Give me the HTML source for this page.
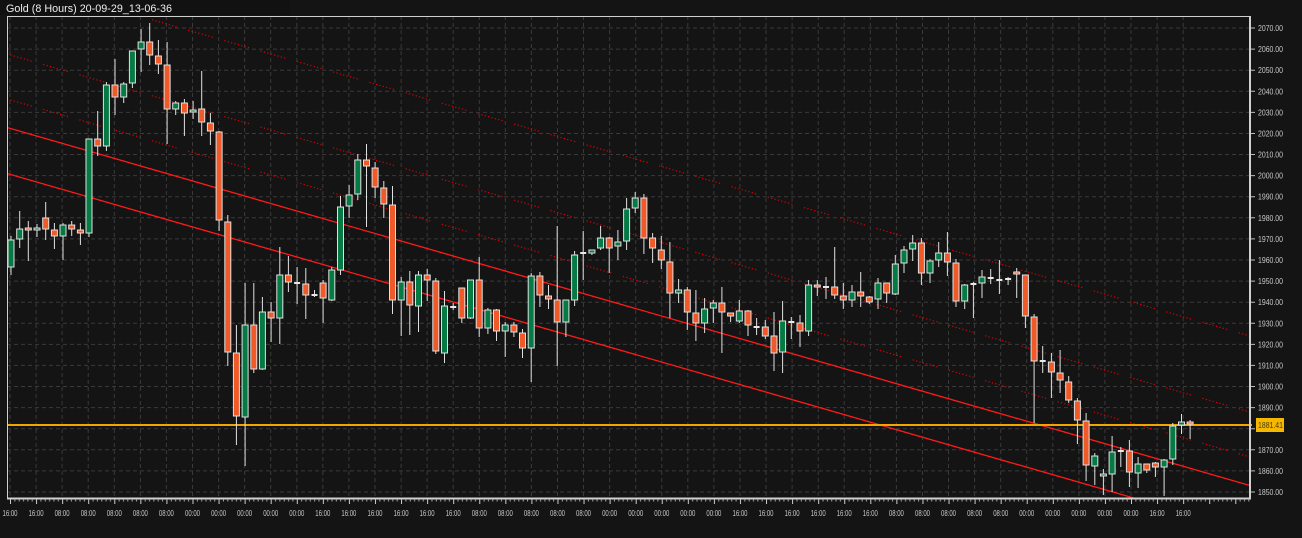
<!DOCTYPE html>
<html><head><meta charset="utf-8"><style>
html,body{margin:0;padding:0;background:#141414;}
svg{display:block;font-family:"Liberation Sans",sans-serif;}
</style></head><body>
<svg width="1302" height="538" viewBox="0 0 1302 538" xmlns="http://www.w3.org/2000/svg">
<rect width="1302" height="538" fill="#141414"/>
<rect x="0" y="0" width="290" height="15" fill="#111"/>
<text x="6" y="12" font-size="11" fill="#eeeeee" textLength="166" lengthAdjust="spacingAndGlyphs">Gold (8 Hours) 20-09-29_13-06-36</text>
<path stroke="#3a3a3a" stroke-width="1" stroke-dasharray="4 3" fill="none" d="M7 28H1250M7 49.1H1250M7 70.2H1250M7 91.3H1250M7 112.4H1250M7 133.5H1250M7 154.5H1250M7 175.6H1250M7 196.7H1250M7 217.8H1250M7 238.9H1250M7 260H1250M7 281.1H1250M7 302.2H1250M7 323.3H1250M7 344.4H1250M7 365.4H1250M7 386.5H1250M7 407.6H1250M7 428.7H1250M7 449.8H1250M7 470.9H1250M7 492H1250"/>
<path stroke="#3a3a3a" stroke-width="1" stroke-dasharray="4 3" fill="none" d="M10 16V498M36.1 16V498M62.1 16V498M88.2 16V498M114.3 16V498M140.4 16V498M166.4 16V498M192.5 16V498M218.6 16V498M244.6 16V498M270.7 16V498M296.8 16V498M322.8 16V498M348.9 16V498M375 16V498M401.1 16V498M427.1 16V498M453.2 16V498M479.3 16V498M505.3 16V498M531.4 16V498M557.5 16V498M583.5 16V498M609.6 16V498M635.7 16V498M661.8 16V498M687.8 16V498M713.9 16V498M740 16V498M766 16V498M792.1 16V498M818.2 16V498M844.2 16V498M870.3 16V498M896.4 16V498M922.5 16V498M948.5 16V498M974.6 16V498M1000.7 16V498M1026.7 16V498M1052.8 16V498M1078.9 16V498M1104.9 16V498M1131 16V498M1157.1 16V498M1183.2 16V498"/>
<defs>
<clipPath id="c"><rect x="7" y="16" width="1243" height="482"/></clipPath>
<pattern id="tk" x="10" y="0" width="26.07" height="538" patternUnits="userSpaceOnUse">
<rect x="0" y="499" width="1" height="5" fill="#ccc"/>
<rect x="4.35" y="499" width="1" height="2.5" fill="#aaa"/>
<rect x="8.7" y="499" width="1" height="2.5" fill="#aaa"/>
<rect x="13.03" y="499" width="1" height="2.5" fill="#aaa"/>
<rect x="17.38" y="499" width="1" height="2.5" fill="#aaa"/>
<rect x="21.72" y="499" width="1" height="2.5" fill="#aaa"/>
</pattern>
</defs>
<g clip-path="url(#c)" fill="none">
<path stroke="#e00000" stroke-width="1.2" stroke-dasharray="1.2 2.3 1.2 2.3 1.2 2.3 1.2 2.3 1.2 2.3 1.2 2.3 1.2 2.3 1.2 12" d="M7 -22L1250 336M7 54L1250 412M7 99L1250 457"/>
<path stroke="#ff1a1a" stroke-width="1.3" d="M7 127.5L1250 485.5M7 173.5L1250 531.5"/>
</g>
<rect x="7" y="424" width="1245" height="2" fill="#f0a500"/>
<path stroke="#e0e0e0" stroke-width="1" fill="none" d="M11 236V275M19.7 211V248M28.3 221V261M37 224V237M45.7 202V240M54.4 223V249M63 223V260M71.7 221V236M80.4 223V245M89 139V237M97.7 111V156M106.4 82V151M115 59V115M123.7 82V103M132.4 51V88M141.1 29V72M149.7 23V65M158.4 40V74M167.1 42V144M175.7 101V115M184.4 99V136M193.1 101V119M201.7 71V136M210.4 113V145M219.1 131V231M227.8 215V366M236.4 325V445M245.1 283V466M253.8 283V373M262.4 297V370M271.1 302V342M279.8 247V344M288.4 256V292M297.1 267V304M305.8 268V319M314.5 290V297M323.1 280V323M331.8 267V301M340.5 196V275M349.1 185V218M357.8 154V200M366.5 144V227M375.1 162V198M383.8 181V218M392.5 186V314M401.2 277V336M409.8 271V335M418.5 271V332M427.2 269V301M435.8 278V354M444.5 291V363M453.2 303V310M461.8 288V323M470.5 280V319M479.2 257V337M487.9 308V334M496.5 309V341M505.2 322V357M513.9 322V337M522.5 329V358M531.2 273V382M539.9 272V307M548.5 285V309M557.2 226V366M565.9 300V337M574.6 251V306M583.2 231V280M591.9 250V255M600.6 226V250M609.2 237V273M617.9 230V260M626.6 198V250M635.2 192V213M643.9 194V254M652.6 233V263M661.3 236V269M669.9 242V318M678.6 279V303M687.3 287V330M695.9 290V341M704.6 298V333M713.3 300V323M721.9 287V353M730.6 313V322M739.3 300V323M748 310V336M756.6 318V335M765.3 320V339M774 312V371M782.6 301V373M791.3 317V339M800 315V347M808.6 280V336M817.3 280V296M826 277V299M834.7 247V299M843.3 283V309M852 285V307M860.7 272V307M869.3 296V304M878 278V309M886.7 283V303M895.3 255V295M904 246V273M912.7 235V261M921.4 238V285M930 259V283M938.7 242V267M947.4 232V276M956 259V307M964.7 284V309M973.4 282V318M982 270V298M990.7 269V284M999.4 260V294M1008.1 277V285M1016.7 268V298M1025.4 275V328M1034.1 314V423M1042.7 346V373M1051.4 353V398M1060.1 350V393M1068.7 376V403M1077.4 398V444M1086.1 413V481M1094.8 453V485M1103.4 469V495M1112.1 436V492M1120.8 447V467M1129.4 440V487M1138.1 457V488M1146.8 464V473M1155.4 462V477M1164.1 459V496M1172.8 423V465M1181.5 414V434M1190.1 420V439"/>
<g fill="#057a45" stroke="#e0e0e0" stroke-width="1">
<rect x="8" y="240" width="6" height="27"/>
<rect x="16.7" y="229" width="6" height="10"/>
<rect x="34" y="228" width="6" height="2"/>
<rect x="60" y="225" width="6" height="11"/>
<rect x="86" y="139" width="6" height="94"/>
<rect x="103.4" y="85" width="6" height="61"/>
<rect x="120.7" y="84" width="6" height="13"/>
<rect x="129.4" y="51" width="6" height="32"/>
<rect x="138.1" y="42" width="6" height="7"/>
<rect x="172.7" y="103" width="6" height="6"/>
<rect x="190.1" y="110" width="6" height="2"/>
<rect x="242.1" y="325" width="6" height="92"/>
<rect x="259.4" y="312" width="6" height="57"/>
<rect x="276.8" y="275" width="6" height="43"/>
<rect x="328.8" y="270" width="6" height="30"/>
<rect x="337.5" y="207" width="6" height="63"/>
<rect x="346.1" y="195" width="6" height="11"/>
<rect x="354.8" y="160" width="6" height="34"/>
<rect x="398.2" y="282" width="6" height="18"/>
<rect x="415.5" y="275" width="6" height="31"/>
<rect x="441.5" y="306" width="6" height="47"/>
<rect x="467.5" y="280" width="6" height="38"/>
<rect x="484.9" y="310" width="6" height="18"/>
<rect x="502.2" y="325" width="6" height="6"/>
<rect x="528.2" y="276" width="6" height="72"/>
<rect x="562.9" y="300" width="6" height="22"/>
<rect x="571.6" y="255" width="6" height="45"/>
<rect x="588.9" y="250" width="6" height="3"/>
<rect x="597.6" y="238" width="6" height="10"/>
<rect x="614.9" y="242" width="6" height="4"/>
<rect x="623.6" y="209" width="6" height="32"/>
<rect x="632.2" y="198" width="6" height="10"/>
<rect x="675.6" y="290" width="6" height="3"/>
<rect x="701.6" y="309" width="6" height="14"/>
<rect x="710.3" y="303" width="6" height="5"/>
<rect x="736.3" y="311" width="6" height="10"/>
<rect x="779.6" y="321" width="6" height="31"/>
<rect x="805.6" y="285" width="6" height="46"/>
<rect x="849" y="292" width="6" height="8"/>
<rect x="875" y="283" width="6" height="16"/>
<rect x="892.3" y="264" width="6" height="30"/>
<rect x="901" y="250" width="6" height="13"/>
<rect x="909.7" y="243" width="6" height="6"/>
<rect x="927" y="261" width="6" height="12"/>
<rect x="935.7" y="253" width="6" height="7"/>
<rect x="961.7" y="285" width="6" height="16"/>
<rect x="979" y="277" width="6" height="6"/>
<rect x="1091.8" y="456" width="6" height="10"/>
<rect x="1100.4" y="474" width="6" height="2"/>
<rect x="1109.1" y="452" width="6" height="22"/>
<rect x="1135.1" y="464" width="6" height="9"/>
<rect x="1161.1" y="460" width="6" height="7"/>
<rect x="1169.8" y="426" width="6" height="33"/>
<rect x="1178.5" y="422" width="6" height="3"/>
</g>
<g fill="#f05a28" stroke="#e0e0e0" stroke-width="1">
<rect x="25.3" y="228" width="6" height="2"/>
<rect x="42.7" y="218" width="6" height="11"/>
<rect x="51.4" y="230" width="6" height="6"/>
<rect x="68.7" y="225" width="6" height="4"/>
<rect x="77.4" y="230" width="6" height="3"/>
<rect x="94.7" y="139" width="6" height="7"/>
<rect x="112" y="85" width="6" height="12"/>
<rect x="146.7" y="42" width="6" height="13"/>
<rect x="155.4" y="56" width="6" height="8"/>
<rect x="164.1" y="65" width="6" height="44"/>
<rect x="181.4" y="103" width="6" height="10"/>
<rect x="198.7" y="109" width="6" height="13"/>
<rect x="207.4" y="123" width="6" height="8"/>
<rect x="216.1" y="132" width="6" height="88"/>
<rect x="224.8" y="222" width="6" height="130"/>
<rect x="233.4" y="353" width="6" height="63"/>
<rect x="250.8" y="325" width="6" height="44"/>
<rect x="268.1" y="312" width="6" height="6"/>
<rect x="285.4" y="275" width="6" height="7"/>
<rect x="302.8" y="284" width="6" height="11"/>
<rect x="320.1" y="283" width="6" height="15"/>
<rect x="363.5" y="160" width="6" height="6"/>
<rect x="372.1" y="168" width="6" height="19"/>
<rect x="380.8" y="188" width="6" height="16"/>
<rect x="389.5" y="205" width="6" height="95"/>
<rect x="406.8" y="282" width="6" height="23"/>
<rect x="424.2" y="275" width="6" height="5"/>
<rect x="432.8" y="281" width="6" height="70"/>
<rect x="458.8" y="288" width="6" height="30"/>
<rect x="476.2" y="280" width="6" height="48"/>
<rect x="493.5" y="310" width="6" height="21"/>
<rect x="510.9" y="325" width="6" height="7"/>
<rect x="519.5" y="333" width="6" height="15"/>
<rect x="536.9" y="276" width="6" height="19"/>
<rect x="545.5" y="296" width="6" height="3"/>
<rect x="554.2" y="300" width="6" height="22"/>
<rect x="606.2" y="238" width="6" height="10"/>
<rect x="640.9" y="198" width="6" height="40"/>
<rect x="649.6" y="238" width="6" height="10"/>
<rect x="658.3" y="250" width="6" height="10"/>
<rect x="666.9" y="262" width="6" height="31"/>
<rect x="684.3" y="290" width="6" height="22"/>
<rect x="692.9" y="313" width="6" height="10"/>
<rect x="718.9" y="303" width="6" height="9"/>
<rect x="727.6" y="313" width="6" height="3"/>
<rect x="745" y="311" width="6" height="14"/>
<rect x="762.3" y="327" width="6" height="9"/>
<rect x="771" y="336" width="6" height="17"/>
<rect x="797" y="323" width="6" height="8"/>
<rect x="814.3" y="285" width="6" height="2"/>
<rect x="831.7" y="287" width="6" height="8"/>
<rect x="840.3" y="296" width="6" height="4"/>
<rect x="857.7" y="292" width="6" height="4"/>
<rect x="866.3" y="297" width="6" height="5"/>
<rect x="883.7" y="283" width="6" height="10"/>
<rect x="918.4" y="243" width="6" height="30"/>
<rect x="944.4" y="253" width="6" height="9"/>
<rect x="953" y="263" width="6" height="38"/>
<rect x="1013.7" y="272" width="6" height="2"/>
<rect x="1022.4" y="275" width="6" height="41"/>
<rect x="1031.1" y="317" width="6" height="44"/>
<rect x="1048.4" y="362" width="6" height="10"/>
<rect x="1057.1" y="373" width="6" height="7"/>
<rect x="1065.7" y="382" width="6" height="18"/>
<rect x="1074.4" y="401" width="6" height="19"/>
<rect x="1083.1" y="421" width="6" height="44"/>
<rect x="1126.4" y="451" width="6" height="21"/>
<rect x="1143.8" y="464" width="6" height="6"/>
<rect x="1152.4" y="463" width="6" height="4"/>
<rect x="1187.1" y="422" width="6" height="2"/>
</g>
<g fill="#e8e8e8">
<rect x="294.1" y="282" width="6" height="2"/>
<rect x="311.5" y="294" width="6" height="2"/>
<rect x="450.2" y="306" width="6" height="2"/>
<rect x="580.2" y="252" width="6" height="2"/>
<rect x="753.6" y="326" width="6" height="2"/>
<rect x="788.3" y="321" width="6" height="2"/>
<rect x="823" y="286" width="6" height="2"/>
<rect x="970.4" y="283" width="6" height="2"/>
<rect x="987.7" y="277" width="6" height="2"/>
<rect x="996.4" y="279" width="6" height="2"/>
<rect x="1005.1" y="278" width="6" height="2"/>
<rect x="1039.7" y="360" width="6" height="2"/>
<rect x="1117.8" y="450" width="6" height="2"/>
</g>
<path stroke="#d0d0d0" fill="none" stroke-width="1" d="M7.5 16V498M7 16.5H1250"/>
<path stroke="#d0d0d0" fill="none" stroke-width="2" d="M7 498.5H1251M1250 16V499"/>
<rect x="7" y="499" width="1243" height="6" fill="url(#tk)"/>
<path stroke="#bbb" stroke-width="1" d="M1251 28H1255M1251 49.1H1255M1251 70.2H1255M1251 91.3H1255M1251 112.4H1255M1251 133.5H1255M1251 154.5H1255M1251 175.6H1255M1251 196.7H1255M1251 217.8H1255M1251 238.9H1255M1251 260H1255M1251 281.1H1255M1251 302.2H1255M1251 323.3H1255M1251 344.4H1255M1251 365.4H1255M1251 386.5H1255M1251 407.6H1255M1251 428.7H1255M1251 449.8H1255M1251 470.9H1255M1251 492H1255"/>
<g font-size="8" fill="#c8c8c8">
<text x="1258" y="31" textLength="25" lengthAdjust="spacingAndGlyphs">2070.00</text>
<text x="1258" y="52.1" textLength="25" lengthAdjust="spacingAndGlyphs">2060.00</text>
<text x="1258" y="73.2" textLength="25" lengthAdjust="spacingAndGlyphs">2050.00</text>
<text x="1258" y="94.3" textLength="25" lengthAdjust="spacingAndGlyphs">2040.00</text>
<text x="1258" y="115.4" textLength="25" lengthAdjust="spacingAndGlyphs">2030.00</text>
<text x="1258" y="136.5" textLength="25" lengthAdjust="spacingAndGlyphs">2020.00</text>
<text x="1258" y="157.5" textLength="25" lengthAdjust="spacingAndGlyphs">2010.00</text>
<text x="1258" y="178.6" textLength="25" lengthAdjust="spacingAndGlyphs">2000.00</text>
<text x="1258" y="199.7" textLength="25" lengthAdjust="spacingAndGlyphs">1990.00</text>
<text x="1258" y="220.8" textLength="25" lengthAdjust="spacingAndGlyphs">1980.00</text>
<text x="1258" y="241.9" textLength="25" lengthAdjust="spacingAndGlyphs">1970.00</text>
<text x="1258" y="263" textLength="25" lengthAdjust="spacingAndGlyphs">1960.00</text>
<text x="1258" y="284.1" textLength="25" lengthAdjust="spacingAndGlyphs">1950.00</text>
<text x="1258" y="305.2" textLength="25" lengthAdjust="spacingAndGlyphs">1940.00</text>
<text x="1258" y="326.3" textLength="25" lengthAdjust="spacingAndGlyphs">1930.00</text>
<text x="1258" y="347.4" textLength="25" lengthAdjust="spacingAndGlyphs">1920.00</text>
<text x="1258" y="368.4" textLength="25" lengthAdjust="spacingAndGlyphs">1910.00</text>
<text x="1258" y="389.5" textLength="25" lengthAdjust="spacingAndGlyphs">1900.00</text>
<text x="1258" y="410.6" textLength="25" lengthAdjust="spacingAndGlyphs">1890.00</text>
<text x="1258" y="452.8" textLength="25" lengthAdjust="spacingAndGlyphs">1870.00</text>
<text x="1258" y="473.9" textLength="25" lengthAdjust="spacingAndGlyphs">1860.00</text>
<text x="1258" y="495" textLength="25" lengthAdjust="spacingAndGlyphs">1850.00</text>
</g>
<rect x="1256" y="418" width="28" height="14" fill="#f5b800"/>
<text x="1258" y="428" font-size="8" fill="#4a3a00" textLength="25" lengthAdjust="spacingAndGlyphs">1881.41</text>
<g font-size="8" fill="#c8c8c8" text-anchor="middle">
<text x="10" y="516" textLength="15" lengthAdjust="spacingAndGlyphs">16:00</text>
<text x="36.1" y="516" textLength="15" lengthAdjust="spacingAndGlyphs">16:00</text>
<text x="62.1" y="516" textLength="15" lengthAdjust="spacingAndGlyphs">08:00</text>
<text x="88.2" y="516" textLength="15" lengthAdjust="spacingAndGlyphs">08:00</text>
<text x="114.3" y="516" textLength="15" lengthAdjust="spacingAndGlyphs">08:00</text>
<text x="140.4" y="516" textLength="15" lengthAdjust="spacingAndGlyphs">08:00</text>
<text x="166.4" y="516" textLength="15" lengthAdjust="spacingAndGlyphs">08:00</text>
<text x="192.5" y="516" textLength="15" lengthAdjust="spacingAndGlyphs">00:00</text>
<text x="218.6" y="516" textLength="15" lengthAdjust="spacingAndGlyphs">00:00</text>
<text x="244.6" y="516" textLength="15" lengthAdjust="spacingAndGlyphs">00:00</text>
<text x="270.7" y="516" textLength="15" lengthAdjust="spacingAndGlyphs">00:00</text>
<text x="296.8" y="516" textLength="15" lengthAdjust="spacingAndGlyphs">00:00</text>
<text x="322.8" y="516" textLength="15" lengthAdjust="spacingAndGlyphs">16:00</text>
<text x="348.9" y="516" textLength="15" lengthAdjust="spacingAndGlyphs">16:00</text>
<text x="375" y="516" textLength="15" lengthAdjust="spacingAndGlyphs">16:00</text>
<text x="401.1" y="516" textLength="15" lengthAdjust="spacingAndGlyphs">16:00</text>
<text x="427.1" y="516" textLength="15" lengthAdjust="spacingAndGlyphs">16:00</text>
<text x="453.2" y="516" textLength="15" lengthAdjust="spacingAndGlyphs">16:00</text>
<text x="479.3" y="516" textLength="15" lengthAdjust="spacingAndGlyphs">08:00</text>
<text x="505.3" y="516" textLength="15" lengthAdjust="spacingAndGlyphs">08:00</text>
<text x="531.4" y="516" textLength="15" lengthAdjust="spacingAndGlyphs">08:00</text>
<text x="557.5" y="516" textLength="15" lengthAdjust="spacingAndGlyphs">08:00</text>
<text x="583.5" y="516" textLength="15" lengthAdjust="spacingAndGlyphs">08:00</text>
<text x="609.6" y="516" textLength="15" lengthAdjust="spacingAndGlyphs">00:00</text>
<text x="635.7" y="516" textLength="15" lengthAdjust="spacingAndGlyphs">00:00</text>
<text x="661.8" y="516" textLength="15" lengthAdjust="spacingAndGlyphs">00:00</text>
<text x="687.8" y="516" textLength="15" lengthAdjust="spacingAndGlyphs">00:00</text>
<text x="713.9" y="516" textLength="15" lengthAdjust="spacingAndGlyphs">00:00</text>
<text x="740" y="516" textLength="15" lengthAdjust="spacingAndGlyphs">16:00</text>
<text x="766" y="516" textLength="15" lengthAdjust="spacingAndGlyphs">16:00</text>
<text x="792.1" y="516" textLength="15" lengthAdjust="spacingAndGlyphs">16:00</text>
<text x="818.2" y="516" textLength="15" lengthAdjust="spacingAndGlyphs">16:00</text>
<text x="844.2" y="516" textLength="15" lengthAdjust="spacingAndGlyphs">16:00</text>
<text x="870.3" y="516" textLength="15" lengthAdjust="spacingAndGlyphs">16:00</text>
<text x="896.4" y="516" textLength="15" lengthAdjust="spacingAndGlyphs">08:00</text>
<text x="922.5" y="516" textLength="15" lengthAdjust="spacingAndGlyphs">08:00</text>
<text x="948.5" y="516" textLength="15" lengthAdjust="spacingAndGlyphs">08:00</text>
<text x="974.6" y="516" textLength="15" lengthAdjust="spacingAndGlyphs">08:00</text>
<text x="1000.7" y="516" textLength="15" lengthAdjust="spacingAndGlyphs">08:00</text>
<text x="1026.7" y="516" textLength="15" lengthAdjust="spacingAndGlyphs">00:00</text>
<text x="1052.8" y="516" textLength="15" lengthAdjust="spacingAndGlyphs">00:00</text>
<text x="1078.9" y="516" textLength="15" lengthAdjust="spacingAndGlyphs">00:00</text>
<text x="1104.9" y="516" textLength="15" lengthAdjust="spacingAndGlyphs">00:00</text>
<text x="1131" y="516" textLength="15" lengthAdjust="spacingAndGlyphs">00:00</text>
<text x="1157.1" y="516" textLength="15" lengthAdjust="spacingAndGlyphs">16:00</text>
<text x="1183.2" y="516" textLength="15" lengthAdjust="spacingAndGlyphs">16:00</text>
</g>
</svg>
</body></html>
